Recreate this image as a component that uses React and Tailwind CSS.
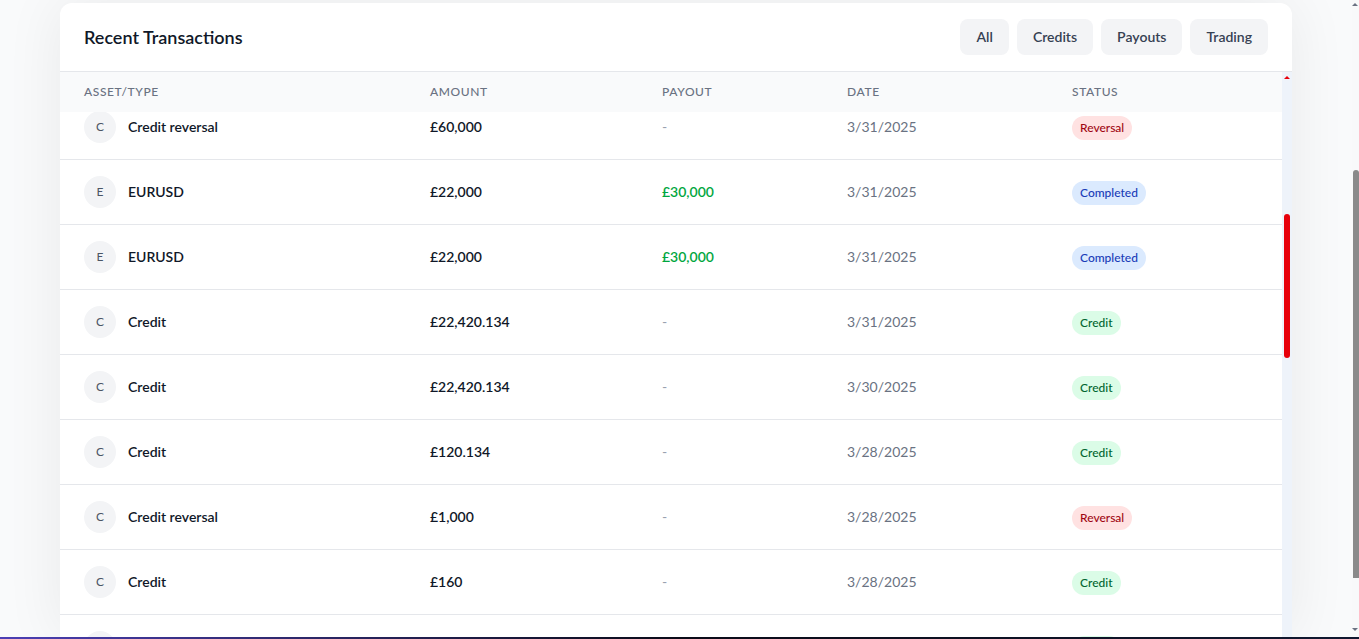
import React from "react";

const rows = [
  { l: "C", name: "Credit reversal", amount: "£60,000", payout: null, date: "3/31/2025", status: "Reversal" },
  { l: "E", name: "EURUSD", amount: "£22,000", payout: "£30,000", date: "3/31/2025", status: "Completed" },
  { l: "E", name: "EURUSD", amount: "£22,000", payout: "£30,000", date: "3/31/2025", status: "Completed" },
  { l: "C", name: "Credit", amount: "£22,420.134", payout: null, date: "3/31/2025", status: "Credit" },
  { l: "C", name: "Credit", amount: "£22,420.134", payout: null, date: "3/30/2025", status: "Credit" },
  { l: "C", name: "Credit", amount: "£120.134", payout: null, date: "3/28/2025", status: "Credit" },
  { l: "C", name: "Credit reversal", amount: "£1,000", payout: null, date: "3/28/2025", status: "Reversal" },
  { l: "C", name: "Credit", amount: "£160", payout: null, date: "3/28/2025", status: "Credit" },
  { l: "C", name: "Credit", amount: "£160", payout: null, date: "3/28/2025", status: "Credit" },
];

const badge = {
  Reversal: "bg-red-100 text-red-800",
  Completed: "bg-blue-100 text-blue-800",
  Credit: "bg-green-100 text-green-800",
};

const cols = "grid grid-cols-[346px_232px_185px_225px_1fr]";

function Row({ r, first }) {
  return (
    <div className={`${cols} h-[65px] shrink-0 items-center border-b border-gray-200 ${first ? "-mt-[17px]" : ""}`}>
      <div className="flex items-center gap-3 px-6">
        <div className="flex h-8 w-8 items-center justify-center rounded-full bg-gray-100 text-xs text-gray-600">{r.l}</div>
        <span className="text-sm font-semibold text-gray-900">{r.name}</span>
      </div>
      <div className="px-6 text-sm font-semibold text-gray-900">{r.amount}</div>
      <div className="px-6 text-sm">
        {r.payout ? <span className="font-semibold text-green-600">{r.payout}</span> : <span className="text-gray-400">-</span>}
      </div>
      <div className="px-6 text-sm text-gray-500">{r.date}</div>
      <div className="px-6">
        <span className={`inline-flex rounded-full px-2 py-1 text-xs leading-4 font-medium ${badge[r.status]}`}>{r.status}</span>
      </div>
    </div>
  );
}

export default function App() {
  return (
    <div className="flex h-[639px] w-full flex-col overflow-hidden bg-gray-50" style={{ fontFamily: 'Lato, "Noto Sans", sans-serif' }}>
      <div className="flex min-h-0 flex-1">
        <div className="min-w-0 flex-1 px-[60px] pt-[3px]">
          <div className="flex h-full flex-col overflow-hidden rounded-t-xl bg-white shadow-[0_0_60px_rgba(0,0,0,0.07)]">
            <div className="flex h-[69px] shrink-0 items-center justify-between border-b border-gray-200 px-6">
              <h2 className="text-lg font-semibold text-gray-900">Recent Transactions</h2>
              <div className="flex gap-2">
                {["All", "Credits", "Payouts", "Trading"].map((b) => (
                  <button key={b} className="h-9 rounded-lg bg-gray-100 px-4 text-sm font-semibold text-gray-700">{b}</button>
                ))}
              </div>
            </div>
            <div className="flex min-h-0 flex-1">
              <div className="flex min-w-0 flex-1 flex-col">
                <div className={`${cols} relative z-10 h-10 shrink-0 items-center bg-gray-50 text-xs font-medium uppercase tracking-wider text-gray-500`}>
                  <div className="px-6">Asset/Type</div>
                  <div className="px-6">Amount</div>
                  <div className="px-6">Payout</div>
                  <div className="px-6">Date</div>
                  <div className="px-6">Status</div>
                </div>
                <div className="flex min-h-0 flex-1 flex-col overflow-hidden">
                  {rows.map((r, i) => (
                    <Row key={i} r={r} first={i === 0} />
                  ))}
                </div>
              </div>
              <div className="flex w-[10px] shrink-0 flex-col items-center bg-[#eef3fa] pt-[4px]">
                <div className="h-0 w-0 border-x-[3px] border-b-[3px] border-x-transparent border-b-red-600" />
                <div className="mt-[135px] h-[144px] w-[6px] rounded-full bg-red-600" />
              </div>
            </div>
          </div>
        </div>
        <div className="flex w-[7px] shrink-0 flex-col items-end bg-[#f8f9fa]">
          <div className="mr-[1px] mt-[3px] h-0 w-0 border-x-[3px] border-b-[3px] border-x-transparent border-b-gray-500" />
          <div className="mt-[164px] h-[408px] w-[6px] rounded-t-sm bg-[#8a8a8a]" />
          <div className="flex-1" />
          <div className="mb-[6px] mr-[1px] h-0 w-0 border-x-[3px] border-t-[3px] border-x-transparent border-t-gray-500" />
        </div>
      </div>
      <div className="h-[2px] shrink-0 bg-linear-to-r from-[#4c3fb5] via-[#0b0b18] to-[#101830]" />
    </div>
  );
}
